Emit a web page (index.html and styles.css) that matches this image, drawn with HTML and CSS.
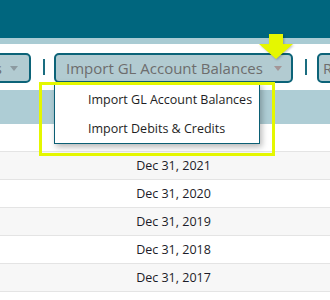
FILE: index.html
```html
<!DOCTYPE html>
<html>
<head>
<meta charset="utf-8">
<link rel="stylesheet" href="styles.css">
</head>
<body>
<div class="page">
  <div class="topbar"></div>
  <div class="subbar"></div>
  <div class="toolbar">
    <div class="btn btn-left"><span class="label">Exports</span><span class="caret"></span></div>
    <div class="sep"></div>
    <div class="btn btn-main"><span class="label">Import GL Account Balances</span><span class="caret"></span></div>
    <div class="sep"></div>
    <div class="btn btn-right"><span class="label">Reports</span></div>
  </div>
  <div class="table">
    <div class="thead"></div>
    <div class="row">Dec 31, 2022</div>
    <div class="row alt">Dec 31, 2021</div>
    <div class="row">Dec 31, 2020</div>
    <div class="row alt">Dec 31, 2019</div>
    <div class="row">Dec 31, 2018</div>
    <div class="row alt">Dec 31, 2017</div>
    <div class="row">&nbsp;</div>
  </div>
  <div class="menu">
    <div class="item">Import GL Account Balances</div>
    <div class="item">Import Debits &amp; Credits</div>
  </div>
  <div class="highlight"></div>
  <svg class="arrow" width="36" height="28" viewBox="0 0 36 28">
    <polygon points="10,1 24,1 24,11 34,11 17,26 0,11 10,11" fill="#e5f700"/>
  </svg>
</div>
</body>
</html>
```

FILE: styles.css
```css
html, body {
  margin: 0;
  padding: 0;
  background: #ffffff;
}
.page {
  position: relative;
  width: 330px;
  height: 300px;
  overflow: hidden;
  font-family: "Open Sans", "Noto Sans", sans-serif;
}
.topbar {
  height: 38px;
  background: #00667e;
}
.subbar {
  height: 6px;
  background: #a9cbd3;
}
.toolbar {
  height: 46px;
  box-sizing: border-box;
  padding-top: 9px;
  display: flex;
  align-items: flex-start;
  white-space: nowrap;
}
.btn {
  flex: none;
  box-sizing: border-box;
  height: 30px;
  border: 2px solid #0c6378;
  border-radius: 5px;
  background: #b2cbd1;
  display: flex;
  align-items: center;
  color: #6d6d6d;
  font-size: 15px;
  overflow: hidden;
}
.btn-left {
  width: 80px;
  margin-left: -49px;
  justify-content: flex-end;
  gap: 8px;
  padding-right: 11px;
}
.btn-main {
  width: 239px;
  justify-content: space-between;
  padding: 0 9px 0 10px;
}
.btn-right {
  width: 70px;
  padding-left: 4px;
}
.caret {
  width: 0;
  height: 0;
  border-left: 4.5px solid transparent;
  border-right: 4.5px solid transparent;
  border-top: 5px solid #a39596;
  margin-top: 1px;
}
.btn-left .caret {
  border-top-color: #8c9aa0;
}
.sep {
  flex: none;
  width: 2px;
  height: 16px;
  margin: 6px 9px 0 12px;
  background: #1a6d80;
}
.sep + .btn-right {
  margin-left: 1px;
}
.thead {
  height: 34px;
  background: #aecdd5;
}
.row {
  height: 27px;
  border-bottom: 1px solid #e4e4e4;
  box-sizing: content-box;
  padding-left: 17px;
  display: flex;
  align-items: center;
  justify-content: center;
  font-size: 12.5px;
  color: #1c1c28;
  background: #ffffff;
}
.row.alt {
  background: #f7f7f7;
}
.menu {
  position: absolute;
  left: 54px;
  top: 82px;
  width: 206px;
  box-sizing: border-box;
  padding-top: 2px;
  background: #ffffff;
  border: 1px solid #0b5f74;
  box-shadow: 2px 3px 6px rgba(0, 0, 0, 0.28);
}
.item {
  height: 29px;
  display: flex;
  align-items: center;
  padding-left: 33px;
  font-size: 12.5px;
  color: #1e1e24;
  white-space: nowrap;
}
.highlight {
  position: absolute;
  left: 39px;
  top: 82px;
  width: 236px;
  height: 74px;
  box-sizing: border-box;
  border: 3px solid #e4f700;
}
.arrow {
  position: absolute;
  left: 259px;
  top: 33px;
  filter: drop-shadow(1px 1px 1px rgba(0, 0, 0, 0.25));
}
```
